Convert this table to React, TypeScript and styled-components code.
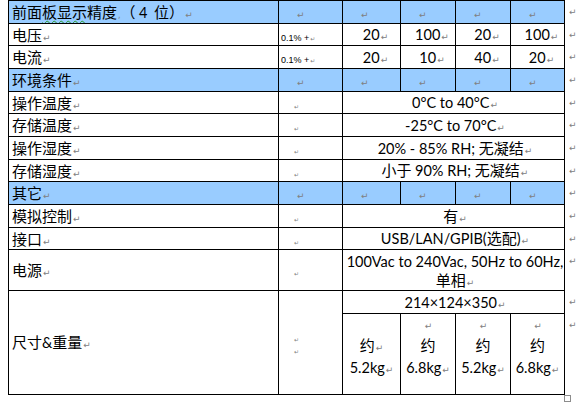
import { createGlobalStyle, styled } from 'styled-components';

const GlobalStyle = createGlobalStyle`
  html, body {
    margin: 0;
    padding: 0;
    background: #fff;
  }
  body {
    font-family: "Noto Sans CJK SC", sans-serif;
    color: #000;
  }
`;

const Page = styled.div`
  padding-left: 8px;
`;

const Table = styled.table`
  border-collapse: collapse;
  table-layout: fixed;
  width: 571px;
`;

const Row = styled.tr<{ $h: number }>`
  height: ${(p) => p.$h}px;
`;

const Cell = styled.td<{ $blue?: boolean; $center?: boolean; $pad?: number; $top?: boolean }>`
  border: 1px solid #000;
  background: ${(p) => (p.$blue ? '#99ccff' : '#fff')};
  padding: 0 0 0 ${(p) => p.$pad ?? 3}px;
  text-align: ${(p) => (p.$center ? 'center' : 'left')};
  vertical-align: ${(p) => (p.$top ? 'top' : 'middle')};
  font-size: 15px;
  line-height: 16px;
  white-space: nowrap;
  overflow: hidden;
`;

const EndCell = styled.td`
  border: none;
  padding: 2px 0 0 3px;
  vertical-align: top;
  line-height: 10px;
`;

const Latin = styled.span`
  font-family: Lato, "Liberation Sans", sans-serif;
  font-size: 14.5px;
  line-height: 1;
`;

const Mark = styled.span<{ $size?: number }>`
  font-family: "DejaVu Sans", sans-serif;
  font-size: ${(p) => p.$size ?? 9}px;
  line-height: 1;
  color: #808080;
  margin-left: 1px;
`;

const Squiggle = styled.span`
  text-decoration: underline wavy #2a9a2a;
  text-decoration-thickness: 1px;
  text-underline-offset: 2px;
`;

const Small = styled.span`
  font-family: "Liberation Sans", sans-serif;
  font-size: 9px;
  line-height: 1;
`;

const Lines = styled.div<{ $lh: number }>`
  line-height: ${(p) => p.$lh}px;
`;

const WeightLines = styled.div`
  line-height: 22px;
  margin-top: -2px;
`;

const Handle = styled.div`
  width: 5px;
  height: 5px;
  border: 1px solid #8c8c8c;
  margin: 0 0 0 556px;
`;

const Cols = () => (
  <colgroup>
    <col style={{ width: 270 }} />
    <col style={{ width: 64 }} />
    <col style={{ width: 58 }} />
    <col style={{ width: 55 }} />
    <col style={{ width: 55 }} />
    <col style={{ width: 54 }} />
    <col style={{ width: 15 }} />
  </colgroup>
);

const End = () => (
  <EndCell>
    <Mark>↵</Mark>
  </EndCell>
);

const SectionRow = ({ title, h = 23 }: { title: React.ReactNode; h?: number }) => (
  <Row $h={h}>
    <Cell $blue>{title}</Cell>
    {[0, 1, 2, 3, 4].map((i) => (
      <Cell key={i} $blue $pad={17}>
        <Mark>↵</Mark>
      </Cell>
    ))}
    <End />
  </Row>
);

const NumberRow = ({ name, values, h = 22 }: { name: string; values: string[]; h?: number }) => (
  <Row $h={h}>
    <Cell>
      {name}
      <Mark>↵</Mark>
    </Cell>
    <Cell $pad={2}>
      <Small>0.1% +</Small>
      <Mark $size={6}>↵</Mark>
    </Cell>
    {values.map((v, i) => (
      <Cell key={i} $center $pad={8}>
        <Latin>{v}</Latin>
        <Mark>↵</Mark>
      </Cell>
    ))}
    <End />
  </Row>
);

const SpanRow = ({ name, h = 23, children }: { name: string; h?: number; children: React.ReactNode }) => (
  <Row $h={h}>
    <Cell>
      {name}
      <Mark>↵</Mark>
    </Cell>
    <Cell $pad={14}>
      <Mark $size={6}>↵</Mark>
    </Cell>
    <Cell colSpan={4} $center>
      {children}
    </Cell>
    <End />
  </Row>
);

const WeightCell = ({ value, lead }: { value: string; lead?: boolean }) => (
  <Cell $center $top $pad={0}>
    <WeightLines>
      <div>{lead ? <Mark>↵</Mark> : '\u00a0'}</div>
      <div>
        约{lead ? null : <Mark>↵</Mark>}
      </div>
      <div>
        <Latin>{value}</Latin>
        <Mark>↵</Mark>
      </div>
    </WeightLines>
  </Cell>
);

const App = () => {
  return (
    <Page>
      <GlobalStyle />
      <Table>
        <Cols />
        <tbody>
          <SectionRow
            title={
              <>
                前面<Squiggle>板显示</Squiggle>精度<Mark $size={8}>,</Mark>（&nbsp;<Latin>4</Latin>&nbsp;&nbsp;位）
                <Mark>↵</Mark>
              </>
            }
          />
          <NumberRow name="电压" values={['20', '100', '20', '100']} />
          <NumberRow name="电流" values={['20', '10', '40', '20']} h={23} />
          <SectionRow
            title={
              <>
                环境条件<Mark>↵</Mark>
              </>
            }
          />
          <SpanRow name="操作温度" h={22}>
            <Latin>0°C to 40°C</Latin>
            <Mark>↵</Mark>
          </SpanRow>
          <SpanRow name="存储温度">
            <Latin>-25°C to 70°C</Latin>
            <Mark>↵</Mark>
          </SpanRow>
          <SpanRow name="操作湿度">
            <Latin>20% - 85% RH; </Latin>无凝结<Mark>↵</Mark>
          </SpanRow>
          <SpanRow name="存储湿度" h={22}>
            小于 <Latin>90% RH; </Latin>无凝结<Mark>↵</Mark>
          </SpanRow>
          <SectionRow
            title={
              <>
                其它<Mark>↵</Mark>
              </>
            }
          />
          <SpanRow name="模拟控制">
            有<Mark>↵</Mark>
          </SpanRow>
          <SpanRow name="接口" h={22}>
            <Latin>USB/LAN/GPIB(</Latin>选配<Latin>)</Latin>
            <Mark>↵</Mark>
          </SpanRow>
          <SpanRow name="电源" h={41}>
            <Lines $lh={19}>
              <Latin>100Vac to 240Vac, 50Hz to 60Hz,</Latin>
              <br />
              单相<Mark>↵</Mark>
            </Lines>
          </SpanRow>
          <Row $h={23}>
            <Cell rowSpan={2}>
              尺寸<Latin>&amp;</Latin>重量<Mark>↵</Mark>
            </Cell>
            <Cell rowSpan={2} $pad={14}>
              <Lines $lh={9}>
                <Mark $size={6}>↵</Mark>
                <br />
                <Mark $size={6}>↵</Mark>
              </Lines>
            </Cell>
            <Cell colSpan={4} $center>
              <Latin>214×124×350</Latin>
              <Mark>↵</Mark>
            </Cell>
            <End />
          </Row>
          <Row $h={81}>
            <WeightCell value="5.2kg" />
            <WeightCell value="6.8kg" lead />
            <WeightCell value="5.2kg" lead />
            <WeightCell value="6.8kg" lead />
            <End />
          </Row>
        </tbody>
      </Table>
      <Handle />
    </Page>
  );
};

export default App;
